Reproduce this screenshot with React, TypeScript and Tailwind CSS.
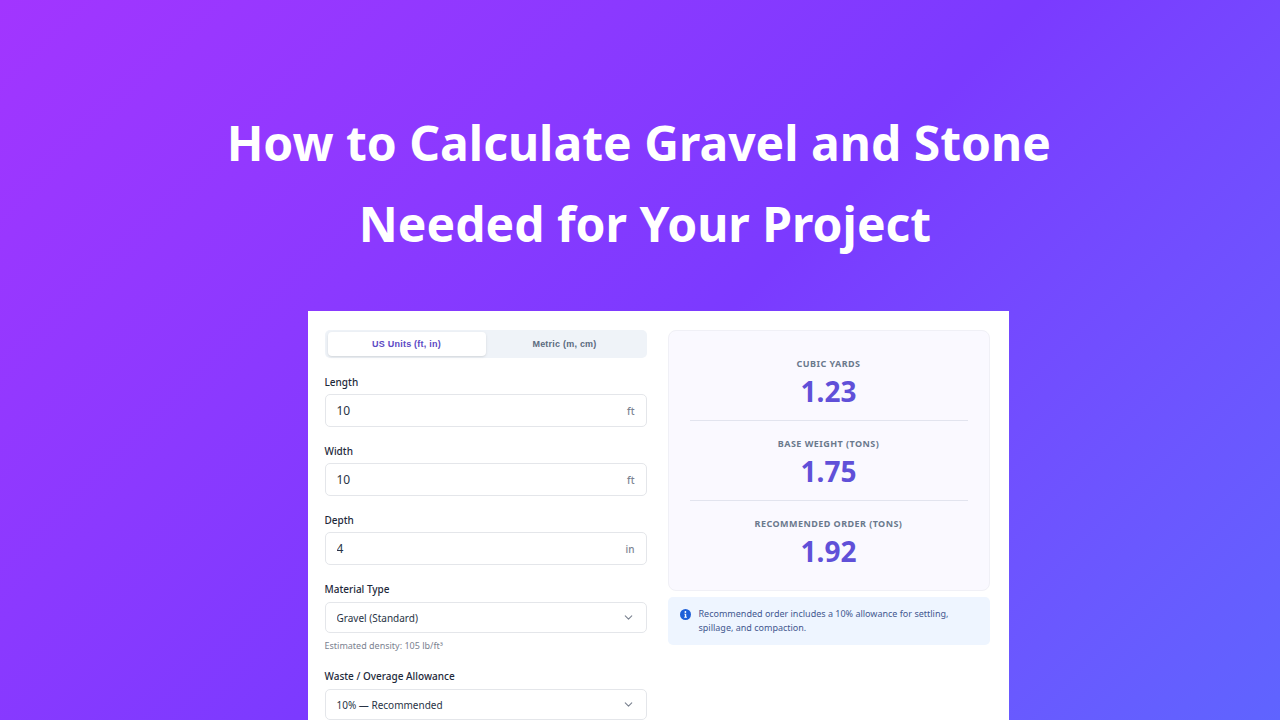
import { useState } from 'react';
import { ChevronDown } from 'lucide-react';

type Unit = 'us' | 'metric';

interface NumberFieldProps {
	id: string;
	label: string;
	initial: string;
	unit: string;
}

interface SelectFieldProps {
	id: string;
	label: string;
	options: string[];
	hint?: string;
}

const results = [
	{ label: 'Cubic Yards', value: '1.23' },
	{ label: 'Base Weight (Tons)', value: '1.75' },
	{ label: 'Recommended Order (Tons)', value: '1.92' },
];

function NumberField({ id, label, initial, unit }: NumberFieldProps) {
	const [value, setValue] = useState<string>(initial);
	return (
		<div className="flex flex-col gap-1">
			<label htmlFor={id} className="text-[10px] leading-4 font-medium text-[#1e293b]">
				{label}
			</label>
			<div className="flex h-[33px] items-center rounded-[5px] border border-[#e4e6ea] bg-white px-[11px]">
				<input
					id={id}
					type="text"
					inputMode="decimal"
					value={value}
					onChange={(e) => setValue(e.target.value)}
					className="w-full min-w-0 flex-1 bg-transparent pt-px text-[12px] text-[#283345] outline-none"
				/>
				<span className="pt-px text-[10px] font-medium text-[#7b8290]">{unit}</span>
			</div>
		</div>
	);
}

function SelectField({ id, label, options, hint }: SelectFieldProps) {
	return (
		<div className="flex flex-col">
			<label htmlFor={id} className="text-[10px] leading-4 font-medium text-[#1e293b]">
				{label}
			</label>
			<div className="mt-[5px] grid items-center">
				<select
					id={id}
					className="col-start-1 row-start-1 h-[31px] w-full appearance-none rounded-[5px] border border-[#e4e6ea] bg-white px-[11px] pt-px text-[10px] text-[#283345] outline-none">
					{options.map((option) => (
						<option key={option}>{option}</option>
					))}
				</select>
				<ChevronDown
					size={13}
					strokeWidth={2}
					className="pointer-events-none col-start-1 row-start-1 mr-3 justify-self-end text-[#7b8290]"
				/>
			</div>
			{hint && <p className="mt-1.5 text-[9px] leading-[13px] text-[#7b8290]">{hint}</p>}
		</div>
	);
}

function UnitToggle() {
	const [unit, setUnit] = useState<Unit>('us');
	const active = 'bg-white text-[#5b48c4] shadow-sm';
	const idle = 'text-[#5b6b7f]';
	return (
		<div className="grid h-7 grid-cols-2 rounded-[5px] bg-[#eff3f8] px-[3px] py-0.5 font-['Liberation_Sans',Arial,sans-serif] text-[9px] font-bold tracking-wide">
			<button
				type="button"
				onClick={() => setUnit('us')}
				className={`rounded-[4px] pt-px ${unit === 'us' ? active : idle}`}>
				US Units (ft, in)
			</button>
			<button
				type="button"
				onClick={() => setUnit('metric')}
				className={`rounded-[4px] pt-px ${unit === 'metric' ? active : idle}`}>
				Metric (m, cm)
			</button>
		</div>
	);
}

function InfoIcon() {
	return (
		<svg viewBox="0 0 11 11" className="size-[11px] shrink-0" aria-hidden="true">
			<circle cx="5.5" cy="5.5" r="5.5" fill="#1d5fd8" />
			<circle cx="5.4" cy="3" r="0.9" fill="#fff" />
			<path d="M4.3 4.7h1.9v3.1h.7v.9H4.2v-.9h.7V5.6h-.6z" fill="#fff" />
		</svg>
	);
}

export default function App() {
	return (
		<main className="flex min-h-screen flex-col items-center bg-linear-135 from-[#a235ff] via-[#7b3aff] via-52% to-[#5f64ff] font-['Noto_Sans',sans-serif]">
			<h1 className="pt-[102px] pl-2.5 text-center text-[48px] leading-[81px] font-bold text-white">
				How to Calculate Gravel and Stone&nbsp;
				<br />
				Needed for Your Project
			</h1>
			<div className="mt-[47px] flex w-full flex-1 justify-center pl-9">
				<div className="grid w-full max-w-[701px] grid-cols-2 items-start gap-x-[21px] bg-white pt-[19px] pr-[19px] pl-[17px]">
					<form className="flex flex-col gap-4">
						<UnitToggle />
						<NumberField id="length" label="Length" initial="10" unit="ft" />
						<NumberField id="width" label="Width" initial="10" unit="ft" />
						<NumberField id="depth" label="Depth" initial="4" unit="in" />
						<SelectField
							id="material"
							label="Material Type"
							options={['Gravel (Standard)']}
							hint="Estimated density: 105 lb/ft³"
						/>
						<SelectField
							id="waste"
							label="Waste / Overage Allowance"
							options={['10% — Recommended']}
						/>
					</form>
					<section className="flex flex-col gap-1.5">
						<dl className="divide-y divide-[#e2e4ee] rounded-lg border border-[#f0f0f6] bg-[#faf9ff] px-[21px] py-2.5 text-center">
							{results.map((result) => (
								<div key={result.label} className="pt-4 pb-[13px]">
									<dt className="text-[9px] leading-[14px] font-bold tracking-wider text-[#6b7a8d] uppercase">
										{result.label}
									</dt>
									<dd className="mt-1 text-[28px] leading-8 font-bold text-[#6050d8]">
										{result.value}
									</dd>
								</div>
							))}
						</dl>
						<div className="flex gap-2 rounded-[5px] bg-[#eef5ff] px-3 py-2.5">
							<span className="pt-0.5">
								<InfoIcon />
							</span>
							<p className="text-[9px] leading-[14px] text-[#43588f]">
								Recommended order includes a 10% allowance for settling, spillage, and compaction.
							</p>
						</div>
					</section>
				</div>
			</div>
		</main>
	);
}
